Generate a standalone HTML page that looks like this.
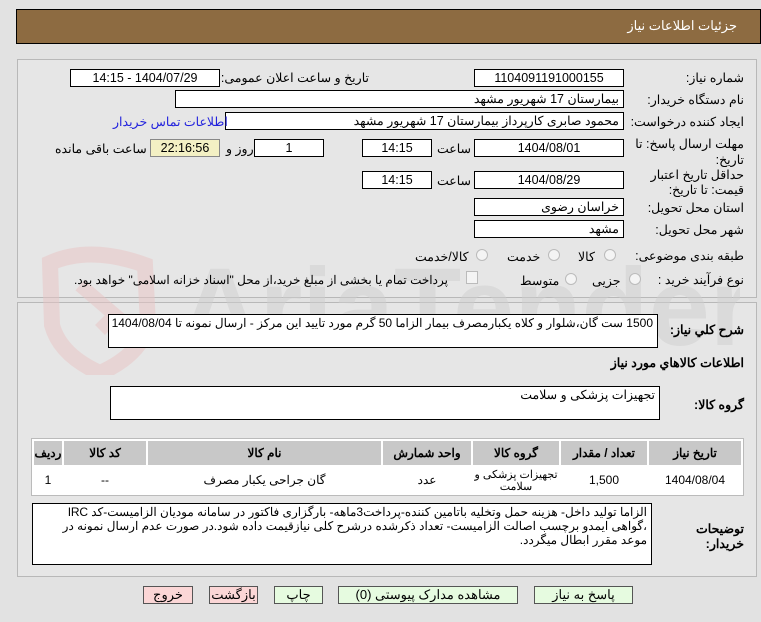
<!DOCTYPE html>
<html><head><meta charset="utf-8"><style>
*{box-sizing:border-box;margin:0;padding:0}
body{width:761px;height:622px;background:#e2e2e2;font-family:"Liberation Sans","Noto Sans CJK SC",sans-serif;font-size:12.5px;color:#000;position:relative;overflow:hidden;direction:rtl}
.a{position:absolute;white-space:nowrap}
.box{position:absolute;background:#fff;border:1px solid #000;height:18px;line-height:16px;padding:0 4px;text-align:right;overflow:hidden}
.c{text-align:center}
.lbl{position:absolute;white-space:nowrap;text-align:right}
.panel{position:absolute;border:1px solid #b8b8b8;background:#e6e6e6}
.rad{position:absolute;width:12px;height:12px;border:1px solid #bbb;border-radius:50%;background:#f4f4f4}
.btn{position:absolute;height:18px;border:1px solid #555;line-height:16px;text-align:center;font-size:13px}
table{border-collapse:separate;border-spacing:2px;position:absolute;table-layout:fixed}
td{text-align:center;font-size:12px;padding:0;line-height:13px;overflow:hidden}
th{background:#c8c8c8;font-size:12px;height:24px;padding:0}
</style></head><body>
<div class="a" style="left:16px;top:9px;width:745px;height:35px;background:#8d6b41;border:1px solid #000"></div>
<div class="a" style="right:24px;top:18px;color:#fff;font-size:13px">جزئیات اطلاعات نیاز</div>

<div class="panel" style="left:17px;top:59px;width:740px;height:239px"></div>
<div class="panel" style="left:17px;top:302px;width:740px;height:275px"></div>

<svg class="a" style="left:20px;top:245px;opacity:0.5" width="720" height="130" viewBox="0 0 720 130">
<path d="M30 18 Q70 0 125 20 L128 80 Q120 110 80 128 Q40 110 32 80 Z" fill="none" stroke="#e9c4c4" stroke-width="16"/>
<path d="M60 40 L95 70 L80 85" fill="none" stroke="#e9c4c4" stroke-width="14"/>
<text x="160" y="100" font-family="Liberation Sans" font-size="110" font-weight="bold" fill="#cfcfcf" direction="ltr">AriaTender.neT</text>
</svg>

<div class="lbl" style="right:17px;top:70px">شماره نیاز:</div>
<div class="box c" style="left:474px;top:69px;width:150px">1104091191000155</div>
<div class="lbl" style="right:392px;top:70px">تاریخ و ساعت اعلان عمومی:</div>
<div class="box c" style="left:70px;top:69px;width:150px">1404/07/29 - 14:15</div>

<div class="lbl" style="right:17px;top:92px">نام دستگاه خریدار:</div>
<div class="box" style="left:175px;top:90px;width:449px">بیمارستان 17 شهریور مشهد</div>

<div class="lbl" style="right:17px;top:114px">ایجاد کننده درخواست:</div>
<div class="box" style="left:225px;top:112px;width:399px">محمود صابری کارپرداز بیمارستان 17 شهریور مشهد</div>
<div class="lbl" style="left:113px;top:114px;color:#2222dd">اطلاعات تماس خریدار</div>

<div class="lbl" style="right:17px;top:136px;line-height:16px">مهلت ارسال پاسخ: تا<br>تاریخ:</div>
<div class="box c" style="left:474px;top:139px;width:150px">1404/08/01</div>
<div class="lbl" style="left:437px;top:141px">ساعت</div>
<div class="box c" style="left:362px;top:139px;width:70px">14:15</div>
<div class="box c" style="left:254px;top:139px;width:70px">1</div>
<div class="lbl" style="left:226px;top:141px">روز و</div>
<div class="box c" style="left:150px;top:139px;width:70px;background:#f3f0c4;border-color:#888">22:16:56</div>
<div class="lbl" style="left:55px;top:141px">ساعت باقی مانده</div>

<div class="lbl" style="right:17px;top:168px;line-height:15px">حداقل تاریخ اعتبار<br>قیمت: تا تاریخ:</div>
<div class="box c" style="left:474px;top:171px;width:150px">1404/08/29</div>
<div class="lbl" style="left:437px;top:173px">ساعت</div>
<div class="box c" style="left:362px;top:171px;width:70px">14:15</div>

<div class="lbl" style="right:17px;top:200px">استان محل تحویل:</div>
<div class="box" style="left:474px;top:198px;width:150px">خراسان رضوی</div>
<div class="lbl" style="right:17px;top:222px">شهر محل تحویل:</div>
<div class="box" style="left:474px;top:220px;width:150px">مشهد</div>

<div class="lbl" style="right:17px;top:248px">طبقه بندی موضوعی:</div>
<div class="rad" style="left:604px;top:249px"></div><div class="lbl" style="left:578px;top:249px">کالا</div>
<div class="rad" style="left:548px;top:249px"></div><div class="lbl" style="left:507px;top:249px">خدمت</div>
<div class="rad" style="left:476px;top:249px"></div><div class="lbl" style="left:415px;top:249px">کالا/خدمت</div>

<div class="lbl" style="right:17px;top:272px">نوع فرآیند خرید :</div>
<div class="rad" style="left:629px;top:273px"></div><div class="lbl" style="left:592px;top:273px">جزیی</div>
<div class="rad" style="left:565px;top:273px"></div><div class="lbl" style="left:520px;top:273px">متوسط</div>
<div class="a" style="left:466px;top:271px;width:12px;height:13px;border:1px solid #bbb;background:#f4f4f4"></div>
<div class="lbl" style="left:74px;top:273px;font-size:12px">پرداخت تمام یا بخشی از مبلغ خرید،از محل "اسناد خزانه اسلامی" خواهد بود.</div>

<div class="lbl" style="right:17px;top:322px;font-weight:bold">شرح کلي نياز:</div>
<div class="box" style="left:108px;top:314px;width:550px;height:34px;font-size:12px;letter-spacing:-0.4px;white-space:nowrap">1500 ست گان،شلوار و کلاه یکبارمصرف بیمار الزاما 50 گرم مورد تایید این مرکز - ارسال نمونه تا 1404/08/04</div>
<div class="lbl" style="right:17px;top:355px;font-weight:bold">اطلاعات کالاهاي مورد نياز</div>
<div class="lbl" style="right:17px;top:397px;font-weight:bold">گروه کالا:</div>
<div class="box" style="left:110px;top:386px;width:550px;height:34px">تجهیزات پزشکی و سلامت</div>

<div class="a" style="left:31px;top:438px;width:713px;height:58px;border:1px solid #bbb;background:#fff"></div>
<table style="left:32px;top:439px;width:711px">
<colgroup><col style="width:92px"><col style="width:86px"><col style="width:86px"><col style="width:88px"><col><col style="width:82px"><col style="width:28px"></colgroup>
<tr><th>تاریخ نیاز</th><th>تعداد / مقدار</th><th>گروه کالا</th><th>واحد شمارش</th><th>نام کالا</th><th>کد کالا</th><th>ردیف</th></tr>
<tr style="height:27px"><td style="height:27px">1404/08/04</td><td>1,500</td><td style="font-size:11px;line-height:12px;white-space:nowrap;letter-spacing:-0.3px">تجهیزات پزشکی و<br>سلامت</td><td>عدد</td><td>گان جراحی یکبار مصرف</td><td>--</td><td>1</td></tr>
</table>

<div class="lbl" style="right:17px;top:522px;font-weight:bold;line-height:15px">توضیحات<br>خریدار:</div>
<div class="box" style="left:32px;top:503px;width:620px;height:62px;line-height:14px;white-space:normal;font-size:12px;letter-spacing:-0.2px;padding-top:1px">الزاما تولید داخل- هزینه حمل وتخلیه باتامین کننده-پرداخت3ماهه- بارگزاری فاکتور در سامانه مودیان الزامیست-کد IRC ،گواهی ایمدو برچسب اصالت الزامیست- تعداد ذکرشده درشرح کلی نیازقیمت داده شود.در صورت عدم ارسال نمونه در موعد مقرر ابطال میگردد.</div>

<div class="btn" style="left:534px;top:586px;width:99px;background:#e6fbe0">پاسخ به نیاز</div>
<div class="btn" style="left:338px;top:586px;width:180px;background:#e6fbe0">مشاهده مدارک پیوستی (0)</div>
<div class="btn" style="left:274px;top:586px;width:49px;background:#e6fbe0">چاپ</div>
<div class="btn" style="left:209px;top:586px;width:49px;background:#fbd6d6">بازگشت</div>
<div class="btn" style="left:143px;top:586px;width:50px;background:#fbd6d6">خروج</div>
</body></html>
